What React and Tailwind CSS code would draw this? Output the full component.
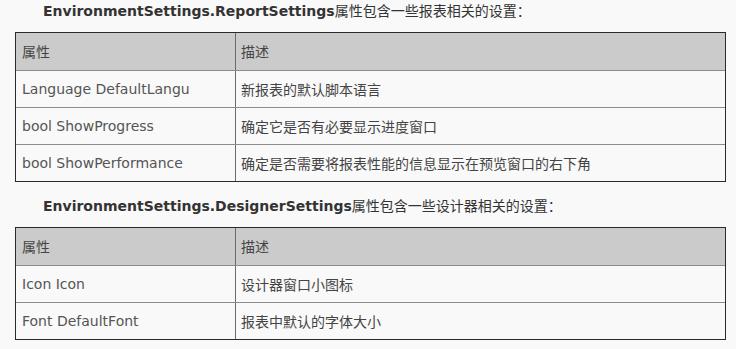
const reportRows = [
  ["Language DefaultLangu", "新报表的默认脚本语言"],
  ["bool ShowProgress", "确定它是否有必要显示进度窗口"],
  ["bool ShowPerformance", "确定是否需要将报表性能的信息显示在预览窗口的右下角"],
];

const designerRows = [
  ["Icon Icon", "设计器窗口小图标"],
  ["Font DefaultFont", "报表中默认的字体大小"],
];

const font = { fontFamily: '"DejaVu Sans", Verdana, "Noto Sans CJK SC", sans-serif' };

function Heading({ name, rest }) {
  return (
    <p className="pl-[28px] h-[20px] text-[14px] leading-[20px] text-[#333] whitespace-nowrap">
      <span className="font-bold">{name}</span>
      <span style={{ fontFamily: '"Noto Sans CJK SC", sans-serif' }}>{rest}</span>
    </p>
  );
}

function PropTable({ rows, className }) {
  const all = [["属性", "描述"], ...rows];
  return (
    <div className={`w-[711px] border border-[#2a2a2a] ${className}`}>
      {all.map(([a, b], i) => (
        <div
          key={i}
          className={`flex ${i === 0 ? "h-[37px] bg-[#cbcbcb]" : "h-[37px] border-t border-[#8c8c8c] bg-[#f9f9f9]"}`}
        >
          <div className="w-[220px] shrink-0 border-r border-[#6a6a6a] flex items-center pl-[6px] text-[14px] text-[#555]">
            <span style={i === 0 ? { fontFamily: '"Noto Sans CJK SC", sans-serif', color: "#444" } : undefined}>{a}</span>
          </div>
          <div
            className="flex-1 flex items-center pl-[5px] text-[14px] text-[#444]"
            style={{ fontFamily: '"Noto Sans CJK SC", sans-serif' }}
          >
            {b}
          </div>
        </div>
      ))}
    </div>
  );
}

export default function App() {
  return (
    <div className="w-[736px] h-[349px] bg-[#f9f9f9] pl-[15px] overflow-hidden" style={font}>
      <Heading name="EnvironmentSettings.ReportSettings" rest="属性包含一些报表相关的设置：" />
      <PropTable rows={reportRows} className="mt-[12px] mb-[13px]" />
      <Heading name="EnvironmentSettings.DesignerSettings" rest="属性包含一些设计器相关的设置：" />
      <PropTable rows={designerRows} className="mt-[12px]" />
    </div>
  );
}
